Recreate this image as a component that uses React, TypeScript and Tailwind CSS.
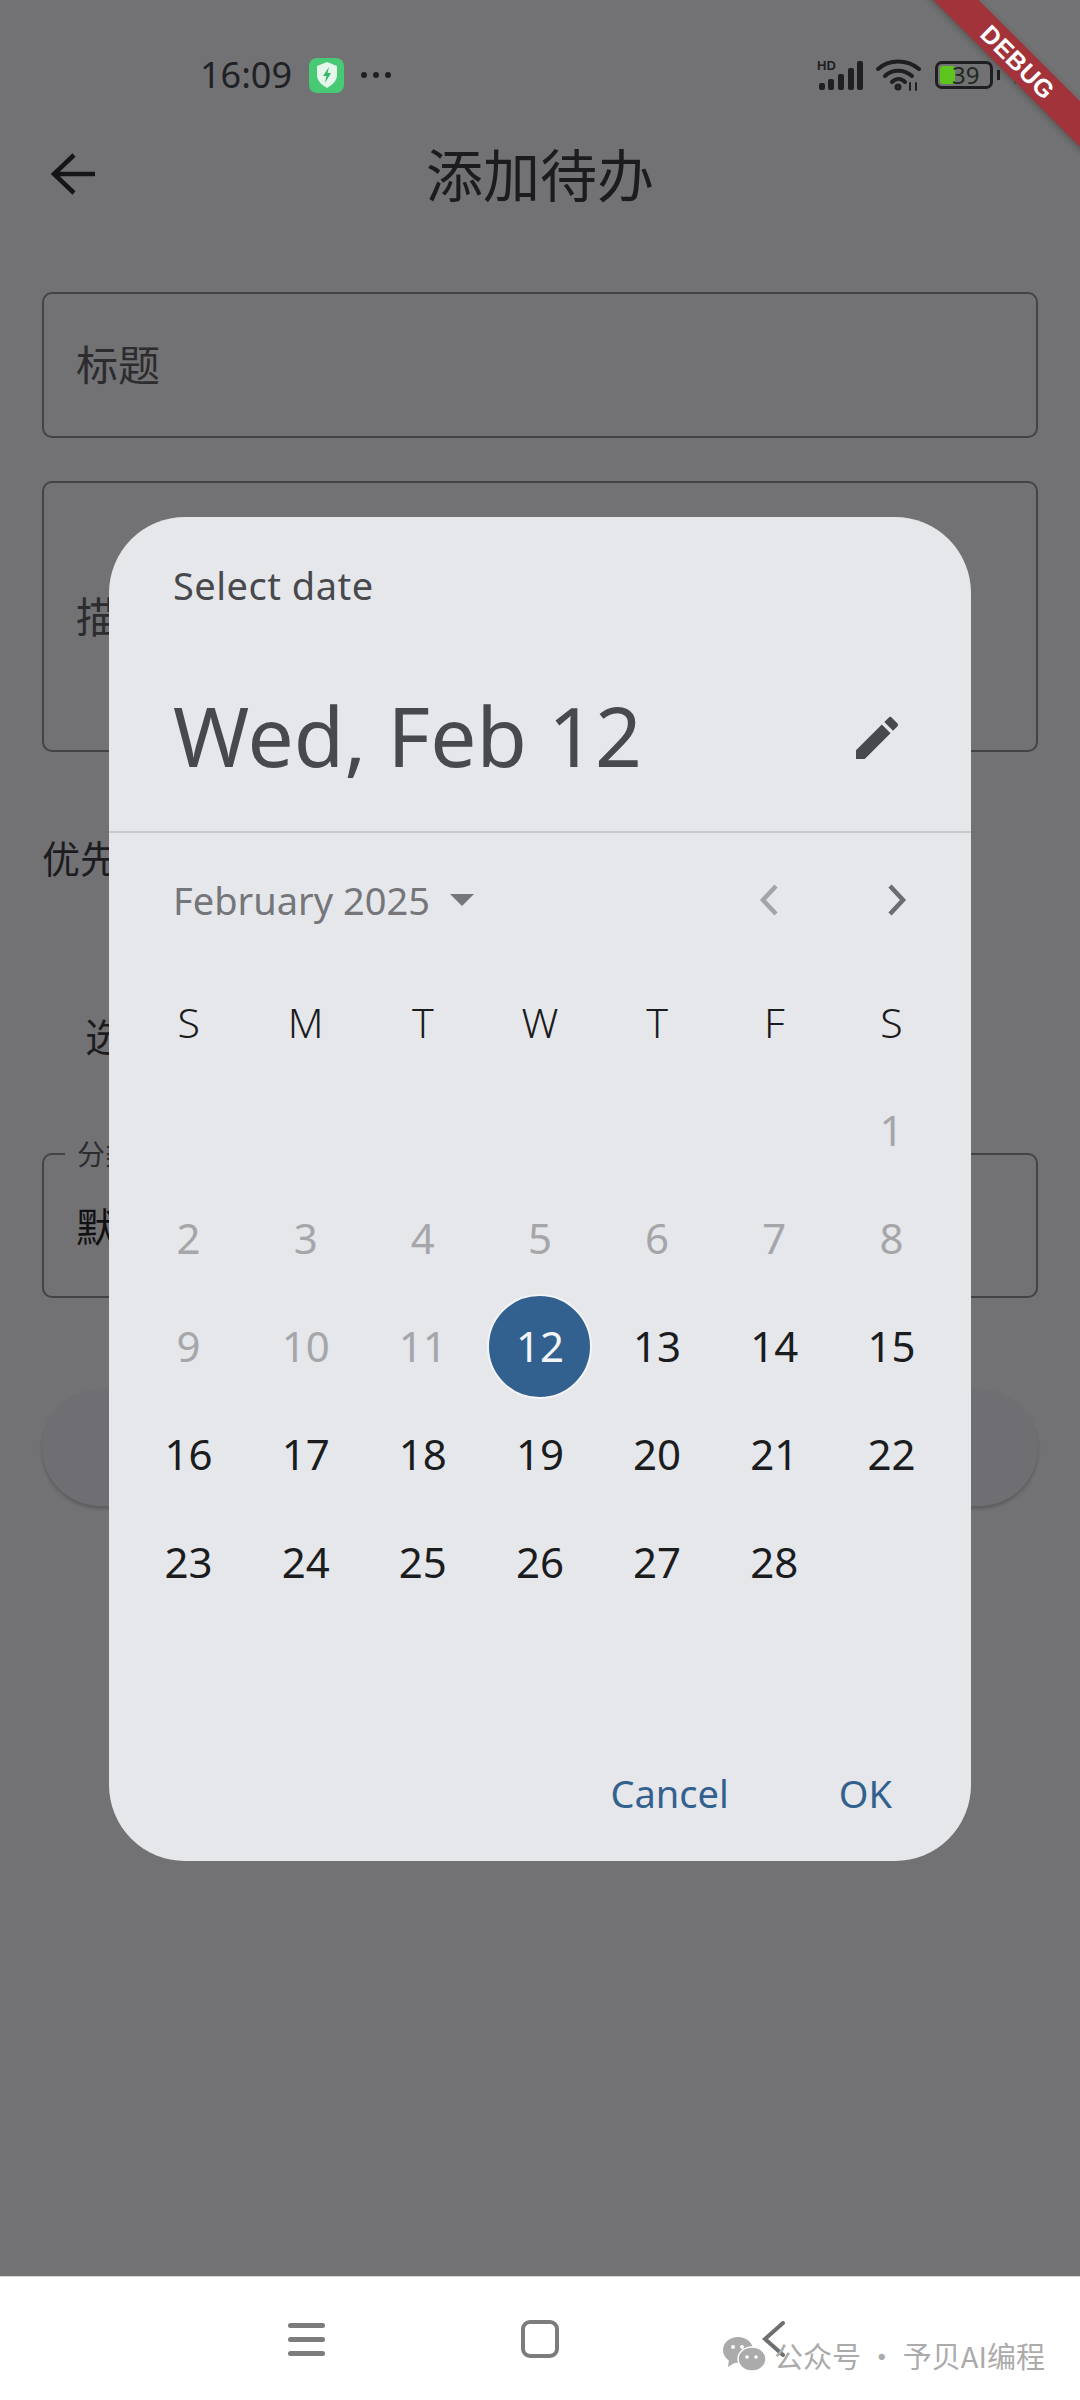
const cjk = "font-['Noto_Sans_CJK_SC','Noto_Sans',sans-serif]";
const latin = "font-['Noto_Sans','Lato',sans-serif]";

const weeks = [
  [null, null, null, null, null, null, 1],
  [2, 3, 4, 5, 6, 7, 8],
  [9, 10, 11, 12, 13, 14, 15],
  [16, 17, 18, 19, 20, 21, 22],
  [23, 24, 25, 26, 27, 28, null],
];

const StatusBar = () => (
  <div className="flex items-center justify-between h-[34px] mt-[58px] pl-[200px] pr-[59px]">
    <div className="flex items-center">
      <span className={`${latin} text-[36px] leading-none text-[#202124]`}>16:09</span>
      <div className="ml-[17px] w-[35px] h-[35px] rounded-[8px] bg-[#48c974] flex items-center justify-center">
        <svg width="24" height="28" viewBox="0 0 24 28">
          <path d="M12 1 L22 5 V14 C22 20 17 24 12 27 C7 24 2 20 2 14 V5 Z" fill="#e4f7ea" />
          <path d="M14 6 L8 15 H11.5 L10 22 L16 12 H12.5 Z" fill="#35b765" />
        </svg>
      </div>
      <div className="ml-[17px] flex gap-[6px]">
        <div className="w-[6px] h-[6px] rounded-full bg-[#1f1f22]" />
        <div className="w-[6px] h-[6px] rounded-full bg-[#1f1f22]" />
        <div className="w-[6px] h-[6px] rounded-full bg-[#1f1f22]" />
      </div>
    </div>
    <div className="flex items-center">
      <svg width="48" height="32" viewBox="0 0 48 32" fill="#1f1f22">
        <text x="0" y="11" fontSize="13" fontWeight="700" fontFamily="Liberation Sans">HD</text>
        <rect x="2" y="24" width="6" height="7" rx="2" />
        <rect x="11" y="20" width="6" height="11" rx="2" />
        <rect x="21" y="15" width="6" height="16" rx="2" />
        <rect x="31" y="9" width="6" height="22" rx="2" />
        <rect x="40" y="2" width="6" height="29" rx="2" />
      </svg>
      <svg className="ml-[11px]" width="46" height="32" viewBox="0 0 46 32" fill="none" stroke="#1f1f22" strokeWidth="4" strokeLinecap="round">
        <path d="M2 10 C13 0 31 0 43 10" />
        <path d="M9 17 C16 10 28 10 36 17" />
        <path d="M16 23 C20 19 25 19 29 23" />
        <circle cx="22" cy="28" r="1.5" />
        <path d="M34 24 V31 M40 24 V31" strokeWidth="2" />
      </svg>
      <div className="ml-[13px] w-[58px] h-[28px] rounded-[7px] border-[3px] border-[#1f1f22] p-[2px] relative">
        <div className="w-[15px] h-full rounded-[3px] bg-[#5ec51f]" />
        <span className={`${latin} absolute left-[14px] top-[-3px] text-[24px] leading-[28px] text-[#1f2a1f]`}>39</span>
      </div>
      <div className="ml-[4px] w-[3px] h-[10px] bg-[#1f1f22]" />
      <svg className="ml-[13px]" width="8" height="20" viewBox="0 0 8 20">
        <path d="M7 0 L1 10 H4 L1 20 L8 8 H5 Z" fill="#2a2020" />
      </svg>
    </div>
  </div>
);

const AppBar = () => (
  <div className="relative flex items-center justify-center h-[60px] mt-[51px]">
    <svg className="absolute left-[50px] top-[9px]" width="46" height="44" viewBox="0 0 46 44" fill="none" stroke="#151517" strokeWidth="4.5">
      <path d="M45 22 H6 M24 3 L4 22 L24 41" />
    </svg>
    <h1 className={`${cjk} text-[57px] leading-none font-normal text-[#1c1c1f] -mt-[2px]`}>添加待办</h1>
  </div>
);

const PageBehind = () => (
  <div className="flex flex-col px-[42px] mt-[89px]">
    <div className="h-[146px] rounded-[10px] border-2 border-[#434346] flex items-center pl-[32px] pb-[4px]">
      <span className={`${cjk} text-[42px] leading-none text-[#2c2c2f]`}>标题</span>
    </div>
    <div className="mt-[43px] h-[271px] rounded-[10px] border-2 border-[#434346] flex items-center pl-[32px] pb-[4px]">
      <span className={`${cjk} text-[42px] leading-none text-[#2c2c2f]`}>描述</span>
    </div>
    <span className={`${cjk} mt-[86px] text-[38px] leading-none text-[#1c1c1f]`}>优先级</span>
    <span className={`${cjk} mt-[139px] ml-[43px] text-[40px] leading-none text-[#1c1c1f]`}>选择</span>
    <div className="relative mt-[98px] h-[145px] rounded-[10px] border-2 border-[#434346] flex items-center pl-[32px] pb-[2px]">
      <span className={`${cjk} text-[40px] leading-none text-[#111113]`}>默认</span>
      <span className={`${cjk} absolute left-[21px] top-[-16px] px-[12px] bg-[#727274] text-[28px] leading-none text-[#2c2c2f]`}>分类</span>
    </div>
    <div className="mt-[91px] h-[117px] rounded-full bg-[#6f6e72] shadow-[0_3px_3px_rgba(50,50,55,0.3)]" />
  </div>
);

const Chevron = ({ left, color }: { left?: boolean; color: string }) => (
  <svg width="24" height="34" viewBox="0 0 24 34" fill="none" stroke={color} strokeWidth="4.5">
    <path d={left ? "M19 3 L6 17 L19 31" : "M5 3 L18 17 L5 31"} />
  </svg>
);

const DatePicker = () => (
  <div className="absolute left-[109px] top-[517px] w-[862px] h-[1344px] rounded-[76px] bg-[#e6e7eb] flex flex-col">
    <div className="pl-[64px] pr-[66px] pt-[50px]">
      <div className={`${latin} text-[38px] leading-[36px] tracking-[0.5px] text-[#48494d]`}>Select date</div>
      <div className="flex items-center justify-between mt-[82px] h-[100px]">
        <span className={`${latin} text-[82px] leading-none text-[#48494c]`}>Wed, Feb 12</span>
        <svg className="mt-[6px]" width="56" height="56" viewBox="0 0 24 24" fill="#48494c">
          <path d="M3 17.25V21h3.75L17.81 9.94l-3.75-3.75L3 17.25zM20.71 7.04a1 1 0 0 0 0-1.41l-2.34-2.34a1 1 0 0 0-1.41 0l-1.83 1.83 3.75 3.75 1.83-1.83z" />
        </svg>
      </div>
    </div>
    <div className="mt-[46px] h-[2px] bg-[#c9cace]" />
    <div className="flex items-center h-[36px] mt-[49px] pl-[64px] pr-[62px]">
      <span className={`${latin} text-[38px] leading-none text-[#75767a]`}>February 2025</span>
      <div className="ml-[20px] w-0 h-0 border-x-[12px] border-x-transparent border-t-[12px] border-t-[#75767a]" />
      <div className="ml-auto flex gap-[104px]">
        <Chevron left color="#a3a4a8" />
        <Chevron color="#6b6c70" />
      </div>
    </div>
    <div className="mt-[50px] px-[21px]">
      <div className={`${latin} grid grid-cols-7 h-[108px] items-center text-center text-[41px] leading-none font-light text-[#1b1c1e]`}>
        {["S", "M", "T", "W", "T", "F", "S"].map((d, i) => (
          <span key={i}>{d}</span>
        ))}
      </div>
      {weeks.map((week, w) => (
        <div key={w} className={`${latin} grid grid-cols-7 h-[108px] items-center justify-items-center text-[42px] leading-none`}>
          {week.map((day, i) =>
            day === 12 ? (
              <div key={i} className="w-[105px] h-[105px] rounded-full bg-[#33618f] border-2 border-[#f3f4f6] flex items-center justify-center text-[#f4f5f7]">
                {day}
              </div>
            ) : (
              <span key={i} className={day !== null && day < 12 ? "text-[#a5a6a9]" : "text-[#1b1c1e]"}>
                {day}
              </span>
            ),
          )}
        </div>
      ))}
    </div>
    <div className={`${latin} mt-auto mb-[48px] flex justify-end pr-[79px] gap-[110px] text-[38px] leading-[40px] text-[#33618f]`}>
      <span>Cancel</span>
      <span>OK</span>
    </div>
  </div>
);

const NavBar = () => (
  <div className="relative h-[124px] bg-white border-t border-[#d6d6d6] shrink-0">
    <div className="mx-auto w-[702px] grid grid-cols-3 items-center justify-items-center pt-[43px]">
      <div className="flex flex-col gap-[9px] w-[37px]">
        <div className="h-[5px] rounded-full bg-[#7c7c7c]" />
        <div className="h-[5px] rounded-full bg-[#7c7c7c]" />
        <div className="h-[5px] rounded-full bg-[#7c7c7c]" />
      </div>
      <div className="w-[38px] h-[38px] rounded-[9px] border-[4px] border-[#7c7c7c]" />
      <svg width="24" height="36" viewBox="0 0 24 36" fill="none" stroke="#6f6f6f" strokeWidth="4" strokeLinecap="round">
        <path d="M21 2 L3 18 L21 34" />
      </svg>
    </div>
    <div className="absolute right-[35px] top-[60px] flex items-center">
      <svg width="44" height="36" viewBox="0 0 44 36" fill="#ababab">
        <ellipse cx="16" cy="13" rx="15" ry="13" />
        <path d="M7 22 L6 30 L14 25 Z" />
        <ellipse cx="30" cy="22" rx="14" ry="12" stroke="#fff" strokeWidth="1.5" />
        <circle cx="11" cy="10" r="2" fill="#fff" />
        <circle cx="20" cy="10" r="2" fill="#fff" />
        <circle cx="25" cy="20" r="1.8" fill="#fff" />
        <circle cx="34" cy="20" r="1.8" fill="#fff" />
      </svg>
      <span className={`${cjk} ml-[8px] text-[29px] leading-none text-[#ababab] whitespace-nowrap`}>公众号 · 予贝AI编程</span>
    </div>
  </div>
);

export default function App() {
  return (
    <div className="relative w-[1080px] h-[2400px] overflow-hidden flex flex-col bg-[#727274]">
      <div className="flex-1">
        <StatusBar />
        <AppBar />
        <PageBehind />
      </div>
      <NavBar />
      <DatePicker />
      {/* flutter debug ribbon */}
      <div className="absolute left-[868px] top-[46px] w-[300px] h-[32px] rotate-45 bg-[#a3333a] shadow-[0_2px_6px_rgba(0,0,0,0.25)] flex items-center justify-center">
        <span className="font-['Liberation_Sans',sans-serif] font-bold text-[25px] leading-none tracking-[0.5px] text-white">DEBUG</span>
      </div>
    </div>
  );
}
